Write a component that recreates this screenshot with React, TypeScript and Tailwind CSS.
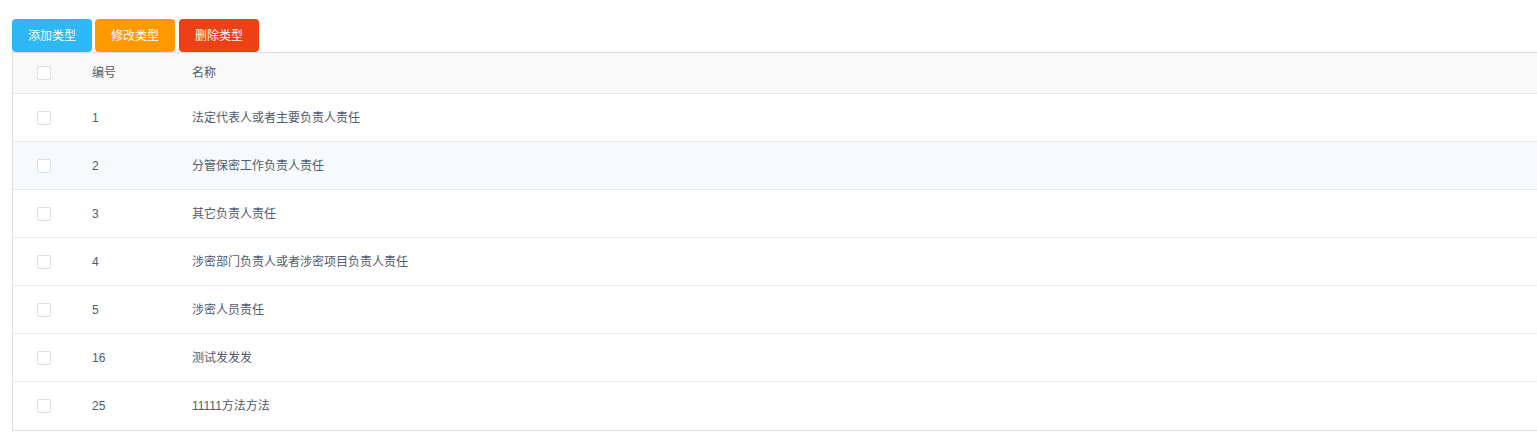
const rows = [
  { id: 1, name: '法定代表人或者主要负责人责任' },
  { id: 2, name: '分管保密工作负责人责任' },
  { id: 3, name: '其它负责人责任' },
  { id: 4, name: '涉密部门负责人或者涉密项目负责人责任' },
  { id: 5, name: '涉密人员责任' },
  { id: 16, name: '测试发发发' },
  { id: 25, name: '11111方法方法' },
]

function Checkbox() {
  return <span className="inline-block w-[14px] h-[14px] rounded-[2px] border border-[#dcdee2] bg-white" />
}

export default function App() {
  return (
    <div
      className="w-[1537px] h-[441px] overflow-hidden bg-white text-[12px] text-[#515a6e]"
      style={{ fontFamily: '"Liberation Sans", "Noto Sans CJK SC", sans-serif' }}
    >
      <div className="pl-[12px] pt-[19px]">
        <div className="flex">
          <button className="w-[80px] h-[33px] rounded-[4px] bg-[#2db7f5] text-white">添加类型</button>
          <button className="ml-[3px] w-[80px] h-[33px] rounded-[4px] bg-[#ff9900] text-white">修改类型</button>
          <button className="ml-[4px] w-[80px] h-[33px] rounded-[4px] bg-[#ed4014] text-white">删除类型</button>
        </div>
        <div className="w-[1560px] border-l border-t border-b border-[#dcdee2]">
          <div className="flex items-center h-[41px] bg-[#f8f8f9] border-b border-[#e8eaec]">
            <div className="w-[62px] flex justify-center">
              <Checkbox />
            </div>
            <div className="w-[100px] pl-[17px]">编号</div>
            <div className="flex-1 pl-[17px]">名称</div>
          </div>
          {rows.map((r, i) => (
            <div
              key={r.id}
              className={
                'flex items-center h-[48px] ' +
                (i < rows.length - 1 ? 'border-b border-[#e8eaec] ' : '') +
                (i === 1 ? 'bg-[#f6fafd]' : 'bg-white')
              }
            >
              <div className="w-[62px] flex justify-center">
                <Checkbox />
              </div>
              <div className="w-[100px] pl-[17px]">{r.id}</div>
              <div className="flex-1 pl-[17px]">{r.name}</div>
            </div>
          ))}
        </div>
      </div>
    </div>
  )
}
